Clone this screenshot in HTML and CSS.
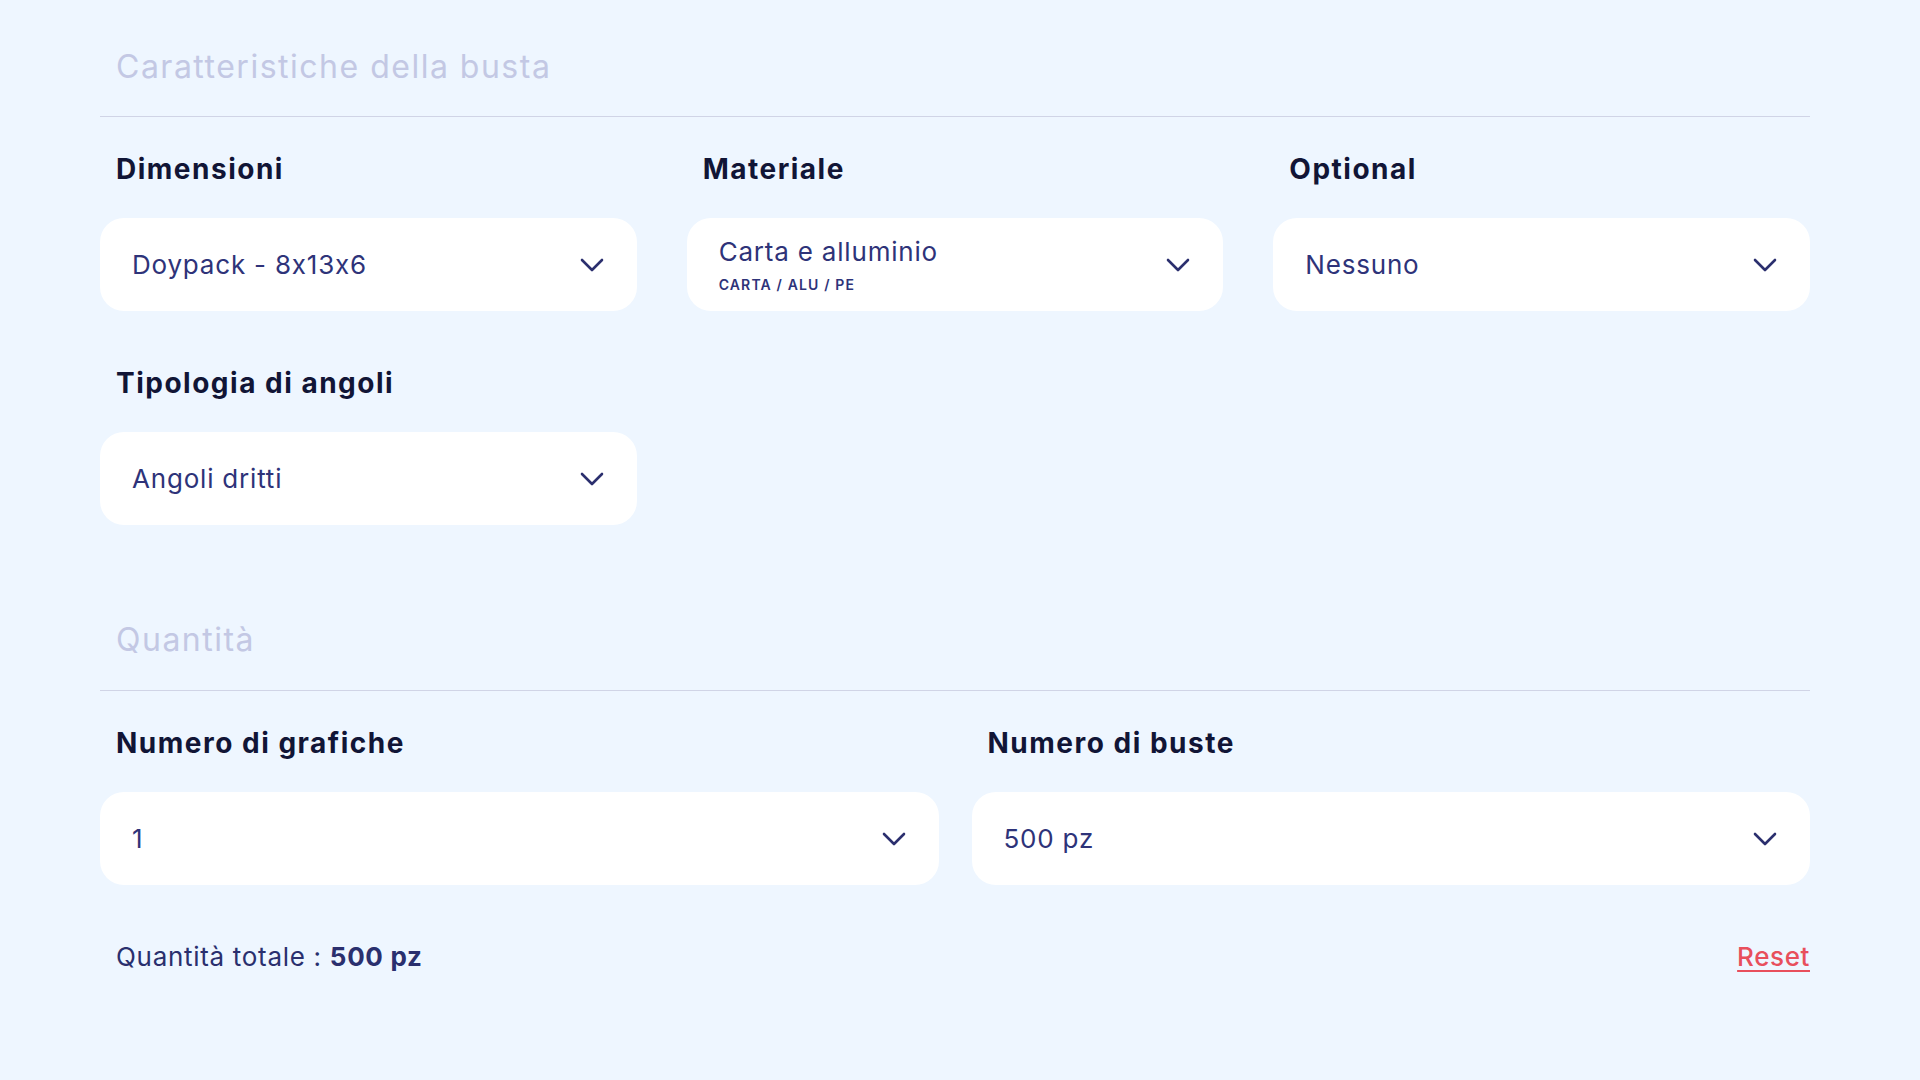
FILE: index.html
```html
<!DOCTYPE html>
<html lang="it">
<head>
<meta charset="utf-8">
<title>Caratteristiche della busta</title>
<link rel="stylesheet" href="styles.css">
</head>
<body>
<main class="page">
  <h2 class="section-title">Caratteristiche della busta</h2>
  <div class="grid grid-3">
    <div class="field">
      <div class="label">Dimensioni</div>
      <div class="select">
        <span class="value">Doypack - 8x13x6</span>
        <svg class="chev" viewBox="0 0 24 14" width="24" height="14"><path d="M2 2 L12 12 L22 2"/></svg>
      </div>
    </div>
    <div class="field">
      <div class="label">Materiale</div>
      <div class="select">
        <span class="value-stack">
          <span class="value">Carta e alluminio</span>
          <span class="sub">CARTA / ALU / PE</span>
        </span>
        <svg class="chev" viewBox="0 0 24 14" width="24" height="14"><path d="M2 2 L12 12 L22 2"/></svg>
      </div>
    </div>
    <div class="field">
      <div class="label">Optional</div>
      <div class="select">
        <span class="value">Nessuno</span>
        <svg class="chev" viewBox="0 0 24 14" width="24" height="14"><path d="M2 2 L12 12 L22 2"/></svg>
      </div>
    </div>
    <div class="field">
      <div class="label">Tipologia di angoli</div>
      <div class="select">
        <span class="value">Angoli dritti</span>
        <svg class="chev" viewBox="0 0 24 14" width="24" height="14"><path d="M2 2 L12 12 L22 2"/></svg>
      </div>
    </div>
  </div>

  <h2 class="section-title second">Quantità</h2>
  <div class="grid grid-2">
    <div class="field">
      <div class="label">Numero di grafiche</div>
      <div class="select">
        <span class="value">1</span>
        <svg class="chev" viewBox="0 0 24 14" width="24" height="14"><path d="M2 2 L12 12 L22 2"/></svg>
      </div>
    </div>
    <div class="field">
      <div class="label">Numero di buste</div>
      <div class="select">
        <span class="value">500 pz</span>
        <svg class="chev" viewBox="0 0 24 14" width="24" height="14"><path d="M2 2 L12 12 L22 2"/></svg>
      </div>
    </div>
  </div>

  <div class="footer">
    <div class="total">Quantità totale : <strong>500 pz</strong></div>
    <a class="reset" href="#">Reset</a>
  </div>
</main>
</body>
</html>
```

FILE: styles.css
```css
html, body {
  margin: 0;
  padding: 0;
}
body {
  background: #eef6ff;
  font-family: "Inter", "Noto Sans", sans-serif;
  font-feature-settings: "calt" 0;
  color: #2c3176;
  width: 1920px;
  height: 1080px;
  overflow: hidden;
}
.page {
  padding: 0 110px 0 100px;
}
.section-title {
  margin: 0;
  padding: 45px 16px 27px;
  font-size: 32px;
  line-height: 44px;
  font-weight: 400;
  color: #c3c8e4;
  border-bottom: 1.5px solid #d0d4e6;
  letter-spacing: 1.5px;
}
.section-title.second {
  margin-top: 48px;
  padding-bottom: 28px;
}
.grid {
  display: grid;
  padding-top: 31px;
}
.grid-3 {
  grid-template-columns: repeat(3, 1fr);
  column-gap: 50px;
  row-gap: 51px;
}
.grid-2 {
  grid-template-columns: repeat(2, 1fr);
  column-gap: 33px;
}
.field {
  display: flex;
  flex-direction: column;
}
.label {
  padding-left: 16px;
  font-size: 28px;
  line-height: 42px;
  font-weight: 650;
  letter-spacing: 1.5px;
  color: #111536;
  margin-bottom: 28px;
}
.select {
  height: 93px;
  box-sizing: border-box;
  background: #ffffff;
  border-radius: 24px;
  padding: 0 33px 0 32px;
  display: flex;
  align-items: center;
  justify-content: space-between;
}
.value {
  font-size: 26px;
  line-height: 28px;
  letter-spacing: 0.8px;
  color: #2e3379;
}
.value-stack {
  display: flex;
  flex-direction: column;
  margin-top: 2px;
}
.sub {
  margin-top: 10px;
  font-size: 14px;
  line-height: 18px;
  font-weight: 600;
  letter-spacing: 1.15px;
  color: #2e3379;
}
.chev {
  width: 24px;
  height: 14px;
  flex: none;
}
.chev path {
  fill: none;
  stroke: #2b2f6e;
  stroke-width: 2.6;
  stroke-linecap: round;
  stroke-linejoin: round;
}
.footer {
  margin-top: 52px;
  display: flex;
  justify-content: space-between;
  align-items: center;
  line-height: 40px;
}
.total {
  padding-left: 16px;
  font-size: 26px;
  letter-spacing: 0.7px;
  color: #2a2f6e;
}
.total strong {
  font-weight: 700;
}
.reset {
  font-size: 26px;
  font-weight: 500;
  letter-spacing: 0.6px;
  color: #e84f5c;
  text-decoration: underline;
  text-underline-offset: 4px;
  text-decoration-thickness: 2px;
}
```
